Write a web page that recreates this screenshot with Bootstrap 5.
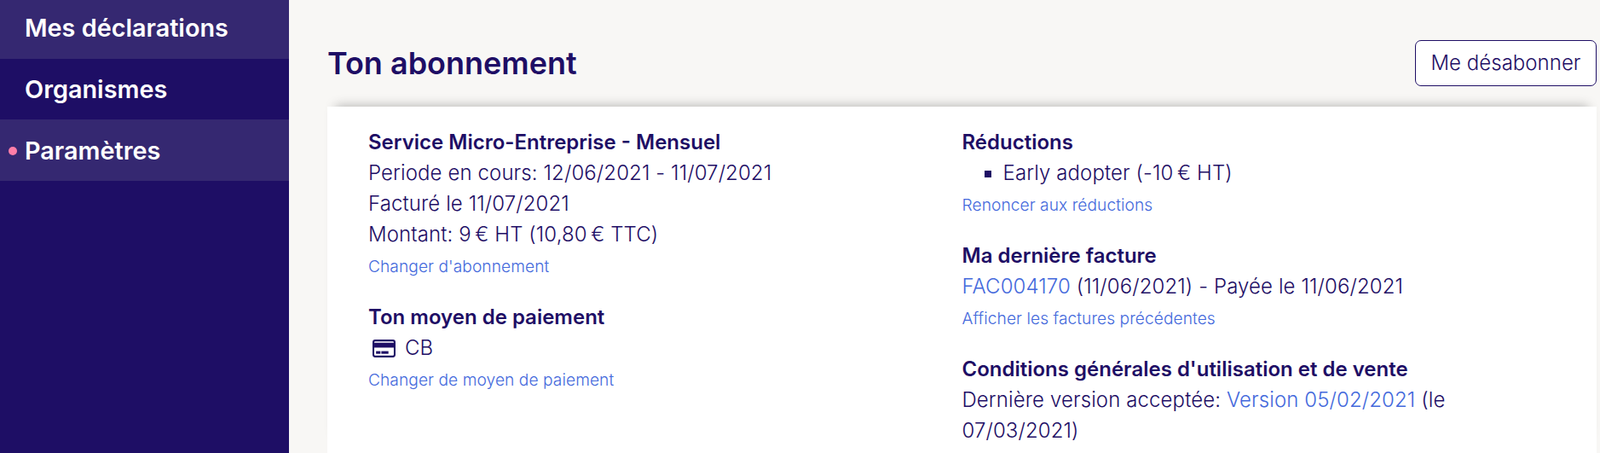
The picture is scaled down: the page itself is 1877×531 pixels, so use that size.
<!DOCTYPE html>
<html lang="fr"><head><meta charset="utf-8">
<link href="https://cdn.jsdelivr.net/npm/bootstrap@5.3.0/dist/css/bootstrap.min.css" rel="stylesheet">
<style>
html,body{height:531px;overflow:hidden}
body{font-family:Inter,"Liberation Sans",sans-serif;font-size:24px;line-height:36px;font-weight:270;letter-spacing:.1px;color:#1e0e65;background:#f8f7f5}
.side{width:339px;background:#1e0e65;height:531px;flex:none;overflow:hidden}
.side .nav{margin-top:-3px}
.side .nav-link{height:71.7px;line-height:72.7px;padding:0 0 0 29px;font-size:28.8px;font-weight:600;letter-spacing:0;color:#fff;position:relative}
.side .is-on{background:#352871}
.side .is-end{line-height:74px}
.side .dot{position:absolute;left:10px;top:32px;width:10px;height:10px;border-radius:50%;background:#ff7ea8}
.main{flex:1;padding:47px 4px 0 45px;min-width:0}
.ttl{font-size:36px;line-height:54px;font-weight:600;letter-spacing:0;margin:0;color:#1e0e65}
.quit{font-size:24px;line-height:36px;font-weight:270;letter-spacing:.03px;color:#1e0e65;border:1px solid #1e0e65;background:#fff;border-radius:7px;padding:8px 17.5px;height:54px}
.sheet{margin-top:24px;background:#fff;border:0;border-radius:0;box-shadow:0 -11px 12px -10px rgba(0,0,0,.28);padding:24px 48px 0;height:406px}
.hd{font-weight:600;letter-spacing:0;margin:0}
.lnk{color:#4469dc;text-decoration:none}
.tiny{display:block;font-size:19.2px;line-height:29px;margin-top:5px;letter-spacing:.05px;color:#4469dc;text-decoration:none}
.blk{margin-bottom:27px}
.txt{margin:0}
.sq{list-style:square;margin:0;padding-left:48px}
.sq li::marker{color:#1e0e65}
.cardico{width:27px;height:21px;margin:0 11px 0 5px;vertical-align:-3px}
</style></head><body>
<div class="d-flex">
<aside class="side">
<nav class="nav flex-column">
<a class="nav-link is-on" href="#">Mes déclarations</a>
<a class="nav-link" href="#">Organismes</a>
<a class="nav-link is-on is-end" href="#"><span class="dot"></span>Paramètres</a>
</nav>
</aside>
<main class="main">
<div class="d-flex justify-content-between align-items-center">
<h1 class="ttl">Ton abonnement</h1>
<button class="btn quit" type="button">Me désabonner</button>
</div>
<div class="card sheet">
<div class="row g-0">
<div class="col-6">
<div class="blk">
<p class="hd">Service Micro-Entreprise - Mensuel</p>
<p class="txt">Periode en cours: 12/06/2021 - 11/07/2021</p>
<p class="txt">Facturé le 11/07/2021</p>
<p class="txt">Montant: 9&#8239;€ HT (10,80&#8239;€ TTC)</p>
<a class="tiny" href="#">Changer d'abonnement</a>
</div>
<div class="blk">
<p class="hd">Ton moyen de paiement</p>
<p class="txt"><svg class="cardico" viewBox="0 0 26 20"><rect x="1" y="1" width="24" height="18" rx="2" fill="none" stroke="currentColor" stroke-width="2"/><rect x="1" y="3.5" width="24" height="5.5" fill="currentColor"/><rect x="4" y="13" width="5" height="3" fill="currentColor"/><rect x="10" y="13" width="8" height="3" fill="currentColor"/></svg>CB</p>
<a class="tiny" href="#">Changer de moyen de paiement</a>
</div>
</div>
<div class="col-6">
<div class="blk">
<p class="hd">Réductions</p>
<ul class="sq"><li>Early adopter (-10&#8239;€ HT)</li></ul>
<a class="tiny" href="#">Renoncer aux réductions</a>
</div>
<div class="blk">
<p class="hd">Ma dernière facture</p>
<p class="txt"><a class="lnk" href="#">FAC004170</a> (11/06/2021) - Payée le 11/06/2021</p>
<a class="tiny" href="#">Afficher les factures précédentes</a>
</div>
<div class="blk">
<p class="hd">Conditions générales d'utilisation et de vente</p>
<p class="txt">Dernière version acceptée: <a class="lnk" href="#">Version 05/02/2021</a> (le<br>07/03/2021)</p>
</div>
</div>
</div>
</div>
</main>
</div>
<script src="https://cdn.jsdelivr.net/npm/bootstrap@5.3.0/dist/js/bootstrap.bundle.min.js"></script>
</body></html>
